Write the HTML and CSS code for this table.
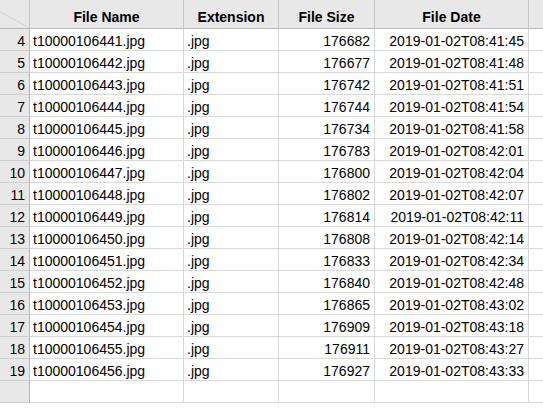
FILE: index.html
```html
<!DOCTYPE html>
<html>
<head>
<meta charset="utf-8">
<link rel="stylesheet" href="styles.css">
</head>
<body>
<div class="sheet">
  <div class="corner"><svg class="corner-tri" width="29" height="28" viewBox="0 0 29 28"><line x1="0" y1="12" x2="29" y2="27.5" stroke="#d2d2d2" stroke-width="1"/></svg></div>
  <div class="colhead">File Name</div>
  <div class="colhead">Extension</div>
  <div class="colhead">File Size</div>
  <div class="colhead">File Date</div>
  <div class="colhead last"></div>

  <div class="rowhead">4</div><div class="cell">t10000106441.jpg</div><div class="cell">.jpg</div><div class="cell num">176682</div><div class="cell num">2019-01-02T08:41:45</div><div class="cell last"></div>
  <div class="rowhead">5</div><div class="cell">t10000106442.jpg</div><div class="cell">.jpg</div><div class="cell num">176677</div><div class="cell num">2019-01-02T08:41:48</div><div class="cell last"></div>
  <div class="rowhead">6</div><div class="cell">t10000106443.jpg</div><div class="cell">.jpg</div><div class="cell num">176742</div><div class="cell num">2019-01-02T08:41:51</div><div class="cell last"></div>
  <div class="rowhead">7</div><div class="cell">t10000106444.jpg</div><div class="cell">.jpg</div><div class="cell num">176744</div><div class="cell num">2019-01-02T08:41:54</div><div class="cell last"></div>
  <div class="rowhead">8</div><div class="cell">t10000106445.jpg</div><div class="cell">.jpg</div><div class="cell num">176734</div><div class="cell num">2019-01-02T08:41:58</div><div class="cell last"></div>
  <div class="rowhead">9</div><div class="cell">t10000106446.jpg</div><div class="cell">.jpg</div><div class="cell num">176783</div><div class="cell num">2019-01-02T08:42:01</div><div class="cell last"></div>
  <div class="rowhead">10</div><div class="cell">t10000106447.jpg</div><div class="cell">.jpg</div><div class="cell num">176800</div><div class="cell num">2019-01-02T08:42:04</div><div class="cell last"></div>
  <div class="rowhead">11</div><div class="cell">t10000106448.jpg</div><div class="cell">.jpg</div><div class="cell num">176802</div><div class="cell num">2019-01-02T08:42:07</div><div class="cell last"></div>
  <div class="rowhead">12</div><div class="cell">t10000106449.jpg</div><div class="cell">.jpg</div><div class="cell num">176814</div><div class="cell num">2019-01-02T08:42:11</div><div class="cell last"></div>
  <div class="rowhead">13</div><div class="cell">t10000106450.jpg</div><div class="cell">.jpg</div><div class="cell num">176808</div><div class="cell num">2019-01-02T08:42:14</div><div class="cell last"></div>
  <div class="rowhead">14</div><div class="cell">t10000106451.jpg</div><div class="cell">.jpg</div><div class="cell num">176833</div><div class="cell num">2019-01-02T08:42:34</div><div class="cell last"></div>
  <div class="rowhead">15</div><div class="cell">t10000106452.jpg</div><div class="cell">.jpg</div><div class="cell num">176840</div><div class="cell num">2019-01-02T08:42:48</div><div class="cell last"></div>
  <div class="rowhead">16</div><div class="cell">t10000106453.jpg</div><div class="cell">.jpg</div><div class="cell num">176865</div><div class="cell num">2019-01-02T08:43:02</div><div class="cell last"></div>
  <div class="rowhead">17</div><div class="cell">t10000106454.jpg</div><div class="cell">.jpg</div><div class="cell num">176909</div><div class="cell num">2019-01-02T08:43:18</div><div class="cell last"></div>
  <div class="rowhead">18</div><div class="cell">t10000106455.jpg</div><div class="cell">.jpg</div><div class="cell num">176911</div><div class="cell num">2019-01-02T08:43:27</div><div class="cell last"></div>
  <div class="rowhead">19</div><div class="cell">t10000106456.jpg</div><div class="cell">.jpg</div><div class="cell num">176927</div><div class="cell num">2019-01-02T08:43:33</div><div class="cell last"></div>
  <div class="rowhead"></div><div class="cell"></div><div class="cell"></div><div class="cell"></div><div class="cell"></div><div class="cell last"></div>
</div>
</body>
</html>
```
FILE: styles.css
```css
html, body {
  margin: 0;
  padding: 0;
  background: #ffffff;
  overflow: hidden;
}
.sheet {
  display: grid;
  grid-template-columns: 30px 154px 95px 96px 154px 40px;
  grid-template-rows: 29px repeat(17, 22px);
  font-family: "Liberation Sans", Arial, sans-serif;
  font-size: 14px;
  color: #000;
  width: 569px;
}
.sheet > div {
  box-sizing: border-box;
  white-space: nowrap;
  overflow: hidden;
}
.corner {
  background: #e8e8e8;
  border-right: 1px solid #c2c2c2;
  border-bottom: 1px solid #b8b8b8;
}
.corner-tri {
  display: block;
}
.colhead {
  background: #e8e8e8;
  border-right: 1px solid #c6c6c6;
  border-bottom: 1px solid #b8b8b8;
  font-weight: bold;
  text-align: center;
  padding-top: 9px;
  line-height: 16px;
}
.rowhead {
  background: #e8e8e8;
  border-right: 1px solid #b8b8b8;
  border-bottom: 1px solid #cfcfcf;
  text-align: right;
  padding: 4px 4px 0 0;
  line-height: 16px;
}
.cell {
  border-right: 1px solid #d9d9d9;
  border-bottom: 1px solid #d9d9d9;
  padding: 4px 3px 0 3px;
  line-height: 16px;
}
.cell.num {
  text-align: right;
  padding-right: 4px;
}
```
